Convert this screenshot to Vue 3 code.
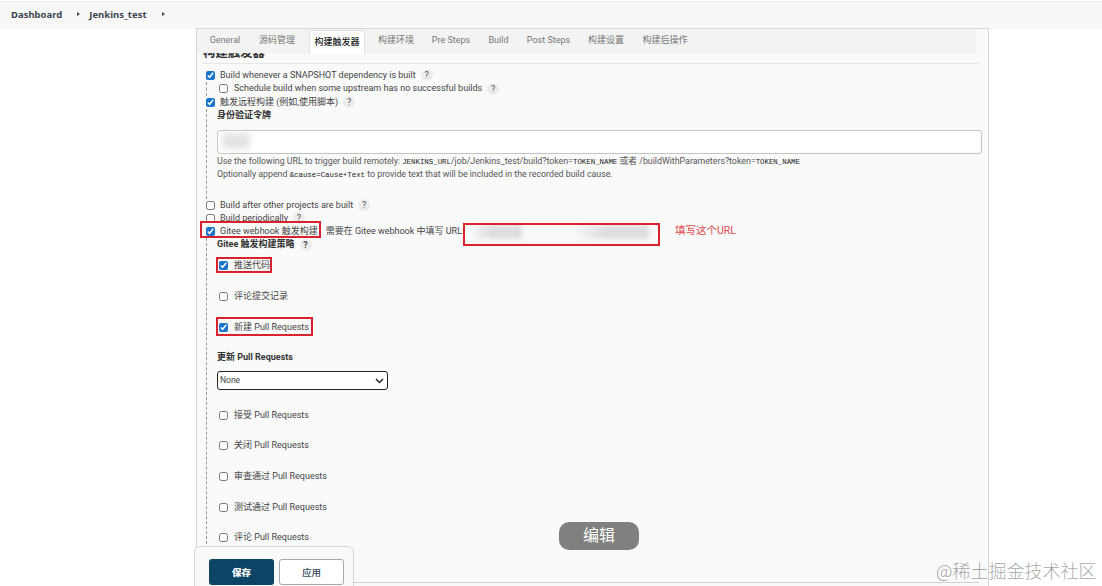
<script setup>
const tabs = [
  { label: 'General', w: 'w1' },
  { label: '源码管理', w: 'w2' },
  { label: '构建触发器', w: 'w3', active: true },
  { label: '构建环境', w: 'w4' },
  { label: 'Pre Steps', w: 'w5' },
  { label: 'Build', w: 'w6' },
  { label: 'Post Steps', w: 'w7' },
  { label: '构建设置', w: 'w8' },
  { label: '构建后操作', w: 'w9' }
]
const prActions = ['接受 Pull Requests', '关闭 Pull Requests', '审查通过 Pull Requests', '测试通过 Pull Requests', '评论 Pull Requests']
</script>

<template>
  <div class="page">
    <header class="topbar">
      <span class="crumb">Dashboard</span>
      <span class="arrow"></span>
      <span class="crumb">Jenkins_test</span>
      <span class="arrow"></span>
    </header>

    <main class="panel">
      <nav class="tabs">
        <span v-for="t in tabs" :key="t.label" class="tab" :class="[t.w, { active: t.active }]">{{ t.label }}</span>
      </nav>

      <div class="body">
        <div class="section-title"><span>构建触发器</span></div>

        <div class="rows">
          <label class="row"><input type="checkbox" checked /><span>Build whenever a SNAPSHOT dependency is built</span><i class="help">?</i></label>
          <div class="nested">
            <label class="row sub"><input type="checkbox" /><span>Schedule build when some upstream has no successful builds</span><i class="help">?</i></label>
          </div>
          <label class="row"><input type="checkbox" checked /><span>触发远程构建 (例如,使用脚本)</span><i class="help">?</i></label>
          <div class="nested remote">
            <div class="row field-label">身份验证令牌</div>
            <div class="token"><div class="smudge"></div></div>
            <div class="row hint">Use the following URL to trigger build remotely: <code>JENKINS_URL</code>/job/Jenkins_test/build?token=<code>TOKEN_NAME</code> 或者 /buildWithParameters?token=<code>TOKEN_NAME</code></div>
            <div class="row hint">Optionally append <code>&amp;cause=Cause+Text</code> to provide text that will be included in the recorded build cause.</div>
          </div>

          <label class="row after"><input type="checkbox" /><span>Build after other projects are built</span><i class="help">?</i></label>
          <label class="row"><input type="checkbox" /><span>Build periodically</span><i class="help">?</i></label>
          <div class="row">
            <input type="checkbox" checked /><span>Gitee webhook 触发构建</span>
            <span class="webhook">需要在 Gitee webhook 中填写 URL:</span>
            <span class="url-smudge"><b></b><b></b></span>
          </div>

          <div class="nested gitee">
            <div class="row field-label strategy">Gitee 触发构建策略<i class="help">?</i></div>
            <label class="row opt first"><input type="checkbox" checked /><span>推送代码</span></label>
            <label class="row opt"><input type="checkbox" /><span>评论提交记录</span></label>
            <label class="row opt"><input type="checkbox" checked /><span>新建 Pull Requests</span></label>
            <div class="row field-label update">更新 Pull Requests</div>
            <div class="select">
              <span>None</span>
              <svg width="9" height="6" viewBox="0 0 9 6"><path d="M1 1l3.500 3.500L8 1" fill="none" stroke="#222" stroke-width="1.500"/></svg>
            </div>
            <label v-for="(a, i) in prActions" :key="a" class="row opt" :class="{ 'after-select': i === 0 }"><input type="checkbox" /><span>{{ a }}</span></label>
          </div>
        </div>
      </div>
      <div class="bottom-field"></div>
    </main>

    <div class="mark m1"></div>
    <div class="mark m2"></div>
    <div class="mark m3"></div>
    <div class="mark m4"></div>
    <div class="note">填写这个URL</div>

    <div class="savebar">
      <button class="btn save">保存</button>
      <button class="btn apply">应用</button>
    </div>

    <div class="edit">编辑</div>
    <div class="watermark">@稀土掘金技术社区</div>
  </div>
</template>

<style>
html, body { margin: 0; background: #fff; overflow: hidden; }
</style>

<style scoped>
.page {
  position: relative;
  width: 1102px;
  height: 586px;
  overflow: hidden;
  background: #fff;
  color: #444;
  font: 9px/13px Roboto, "Noto Sans CJK SC", sans-serif;
}
.topbar {
  box-sizing: border-box;
  height: 28px;
  border-top: 1px solid #efefef;
  margin-top: 1px;
  background: #f8f8f8;
  display: flex;
  align-items: center;
  padding-left: 11px;
  padding-bottom: 3px;
}
.crumb { font: 700 9.500px/13px "Noto Sans", sans-serif; color: #3c4650; }
.arrow {
  width: 0; height: 0;
  margin: 0 9px 0 15px;
  border-left: 3px solid #444;
  border-top: 2.500px solid transparent;
  border-bottom: 2.500px solid transparent;
}
.panel {
  box-sizing: border-box;
  position: relative;
  width: 793px;
  height: 558px;
  margin-left: 196px;
  margin-top: -1px;
  border: 1px solid #d6d6d6;
  border-bottom: 0;
  background: #fafafa;
}
.tabs {
  height: 24px;
  margin-right: 12px;
  background: #f3f3f3;
  display: flex;
  align-items: center;
  padding-left: 4px;
  color: #777;
}
.tab { box-sizing: border-box; text-align: center; height: 24px; line-height: 22px; }
.w1 { width: 48px; } .w2 { width: 56px; } .w3 { width: 56px; margin-left: 4px; } .w4 { width: 62px; }
.w5 { width: 48px; } .w6 { width: 47px; } .w7 { width: 53px; } .w8 { width: 62px; } .w9 { width: 56px; }
.tab.active {
  background: #fff;
  color: #222;
  font-weight: 500;
  border: 1px solid #e2e2e2;
  border-bottom: 0;
  border-radius: 3px 3px 0 0;
  margin-top: 1px;
}
.body { padding-left: 6px; padding-right: 6px; height: 534px; overflow: hidden; }
.section-title {
  height: 10px;
  margin-right: 3px;
  overflow: hidden;
  border-bottom: 1px solid #e7e7e7;
  font-size: 12.400px;
  font-weight: 700;
  color: #333;
}
.section-title span { display: block; height: 6px; overflow: hidden; line-height: 2px; margin-top: -1px; }
.rows { padding-top: 4.500px; }
.row { display: flex; align-items: center; height: 13.500px; white-space: pre; }
.row input {
  width: 9px; height: 9px; margin: 0 5px 0 3px;
  accent-color: #1a74c9; flex: none;
}
.help {
  width: 12px; height: 12px; margin-left: 5px;
  border-radius: 50%;
  background: #ececec;
  color: #555;
  font-style: normal;
  font-size: 9px;
  line-height: 12px;
  text-align: center;
}
.nested { margin-left: 3px; border-left: 1px dashed #999; }
.row.sub input { margin-left: 12px; margin-right: 6px; }
.field-label { font-weight: 700; color: #333; padding-left: 10px; }
.remote { padding-bottom: 18px; }
.token {
  box-sizing: border-box;
  position: relative;
  margin: 7px 0 0 10px;
  width: 765px;
  height: 24px;
  background: #fff;
  border: 1px solid #c4c4c4;
  border-radius: 3px;
}
.smudge {
  position: absolute; left: 4px; top: 2px;
  width: 28px; height: 16px;
  background: #e4e4e4;
  filter: blur(3px);
}
.hint { padding-left: 10px; height: 13px; color: #555; display: block; line-height: 13px; font-size: 8.800px; }
.hint code { font-family: "Liberation Mono", monospace; font-size: 7.400px; color: #222; }
.token + .hint { margin-top: 1px; }
.after { height: 13px; }
.webhook { margin-left: 8px; }
.url-smudge {
  display: flex;
  gap: 55px;
  margin-left: 8px;
}
.url-smudge b {
  display: block;
  width: 50px; height: 14px;
  background: linear-gradient(90deg, #f4f4f4, #dedede 40%);
  filter: blur(2px);
}
.url-smudge b + b { width: 72px; background: linear-gradient(90deg, #f4f4f4, #dedede 40%); }
.strategy { margin-top: -0.500px; }
.row.opt { padding-left: 9px; margin-top: 17.170px; }
.row.opt input { margin-right: 6px; }
.row.opt.first { margin-top: 7.500px; }
.update { margin-top: 17px; }
.select {
  box-sizing: border-box;
  display: flex;
  align-items: center;
  justify-content: space-between;
  margin: 7px 0 0 10px;
  width: 171px;
  height: 19px;
  padding: 0 3px 0 2px;
  background: #fff;
  border: 1.500px solid #222;
  border-radius: 3px;
  font-size: 8.500px;
  color: #444;
}
.row.opt.after-select { margin-top: 18px; }
.bottom-field {
  position: absolute;
  left: 156px; right: 9px; bottom: 3px;
  border-top: 1px solid #cfcfcf;
}
.mark { position: absolute; box-sizing: border-box; border: 2px solid #d8222e; }
.m1 { left: 200px; top: 221px; width: 121px; height: 17px; }
.m2 { left: 463px; top: 223px; width: 197px; height: 23px; }
.m3 { left: 216px; top: 257px; width: 56px; height: 16px; }
.m4 { left: 216px; top: 317px; width: 97px; height: 19px; }
.note { position: absolute; left: 675px; top: 224px; font-size: 10.500px; color: #e0464c; }
.savebar {
  box-sizing: border-box;
  position: absolute;
  left: 194px; top: 546px;
  width: 160px; height: 45px;
  display: flex;
  gap: 5px;
  padding: 12px 0 0 14px;
  background: #f9faf7;
  border: 1px solid #cfdccf;
  border-radius: 6px 6px 0 0;
}
.btn {
  box-sizing: border-box;
  width: 65px; height: 26px;
  padding: 0;
  border-radius: 3px;
  font: 700 9.500px/24px "Noto Sans CJK SC", sans-serif;
}
.save { background: #0c4466; color: #fff; border: 0; font-weight: 900; }
.apply { background: #fff; color: #33485a; border: 1px solid #a9a9a9; font-weight: 500; }
.edit {
  position: absolute;
  left: 559px; top: 522px;
  width: 80px; height: 28px;
  border-radius: 10px;
  background: #808080;
  color: #fff;
  font-size: 16px;
  line-height: 27px;
  text-align: center;
}
.watermark {
  position: absolute;
  left: 936px; top: 558px;
  font: 300 18px/24px "Noto Sans CJK SC", sans-serif;
  color: rgba(110, 110, 110, 0.62);
  white-space: nowrap;
}
</style>
